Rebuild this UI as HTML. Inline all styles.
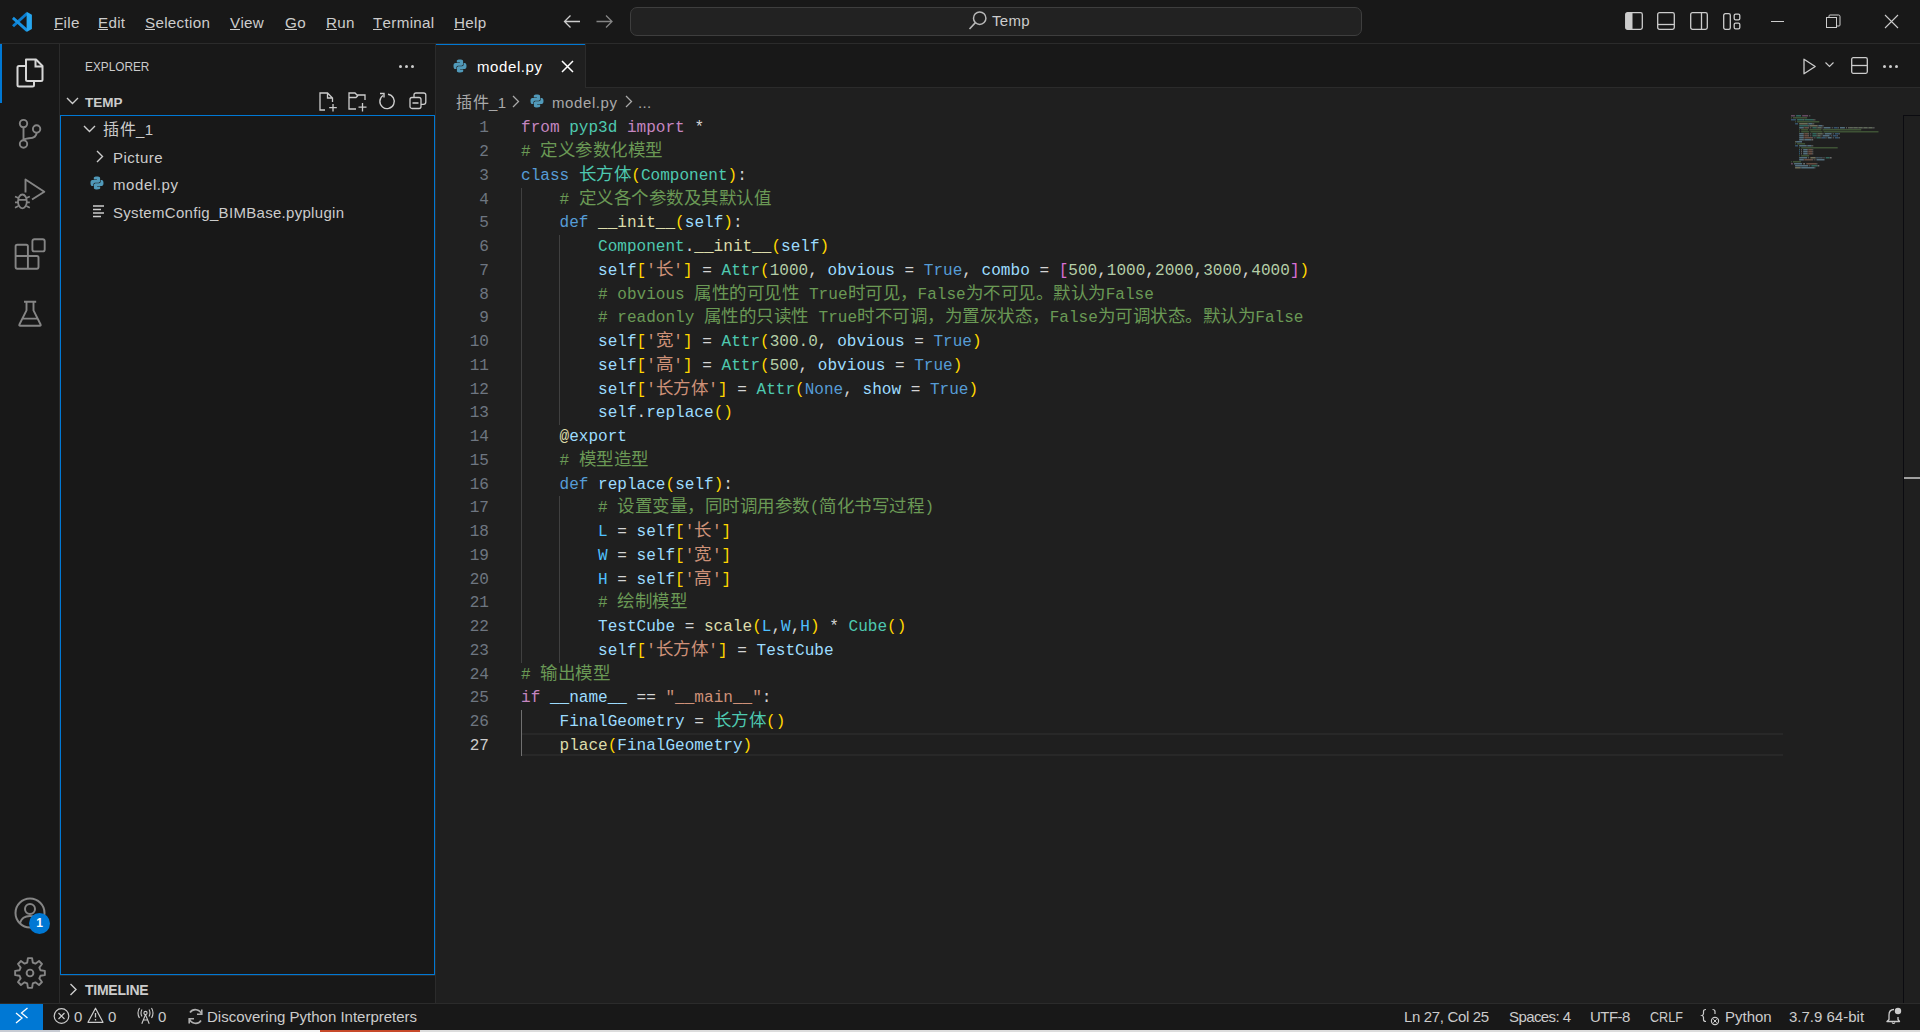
<!DOCTYPE html>
<html lang="zh-CN"><head><meta charset="utf-8">
<style>
*{box-sizing:border-box;margin:0;padding:0}
html,body{width:1920px;height:1032px;overflow:hidden;background:#181818;font-family:"Liberation Sans",sans-serif;color:#cccccc}
.a{position:absolute}
svg{position:absolute;overflow:visible}
#title{left:0;top:0;width:1920px;height:44px;background:#181818;border-bottom:1px solid #2b2b2b}
.menu{top:14px;font-size:15.2px;letter-spacing:0.3px;line-height:18px;color:#cccccc;white-space:pre}
.menu u{text-decoration:none;position:relative}.menu u:after{content:"";position:absolute;left:0;right:0.3px;top:15px;height:1px;background:#cccccc}
#cc{left:630px;top:7px;width:732px;height:29px;border:1px solid #3e3e3e;border-radius:7px;background:#222222}
#act{left:0;top:44px;width:60px;height:959px;background:#181818;border-right:1px solid #2b2b2b}
#side{left:60px;top:44px;width:376px;height:959px;background:#181818;border-right:1px solid #2b2b2b}
#tabs{left:436px;top:44px;width:1484px;height:44px;background:#181818;border-bottom:1px solid #2b2b2b}
#tab{left:436px;top:44px;width:150px;height:44px;background:#1f1f1f;border-right:1px solid #2b2b2b}
#editor{left:436px;top:88px;width:1484px;height:915px;background:#1f1f1f}
#status{left:0;top:1003px;width:1920px;height:27px;background:#181818;border-top:1px solid #2b2b2b}
#strip{left:0;top:1030px;width:1920px;height:2px;background:#dcdcdc}
.code{font-family:"Liberation Mono",monospace;font-size:16.065px;line-height:23.75px;white-space:pre;color:#d4d4d4}
.ln{position:absolute;left:436px;width:53px;text-align:right;color:#6e7681}
.cl{position:absolute;left:521px}
.c{font-size:17.5px;line-height:1;letter-spacing:0.5px}
.kw{color:#c586c0}.st{color:#569cd6}.cn{color:#4ec9b0}.fn{color:#dcdcaa}.vr{color:#9cdcfe}.cv{color:#4fc1ff}
.s{color:#ce9178}.n{color:#b5cea8}.cm{color:#6a9955}.b1{color:#ffd700}.b2{color:#da70d6}.b3{color:#179fff}
.ui{font-size:15px;letter-spacing:0.3px;line-height:18px;white-space:pre}
</style></head><body>
<div id="title" class="a"></div>
<div id="act" class="a"></div>
<div id="side" class="a"></div>
<div id="tabs" class="a"></div>
<div id="tab" class="a"></div>
<div class="a" style="left:436px;top:44px;width:149px;height:1px;background:#0078d4"></div>
<div id="editor" class="a"></div>
<div id="status" class="a"></div>
<div id="strip" class="a"></div>
<div class="a" style="left:522px;top:733px;width:1261px;height:23px;border-top:2px solid #282828;border-bottom:2px solid #282828"></div>
<div class="a" style="left:521px;top:709.5px;width:1px;height:46.5px;background:#707070"></div>
<div class="a" style="left:559px;top:496.25px;width:1px;height:166.25px;background:#404040"></div>
<div class="a" style="left:559px;top:235.00px;width:1px;height:190.00px;background:#404040"></div>
<div class="a" style="left:521px;top:187.50px;width:1px;height:475.00px;background:#404040"></div>
<div class="code ln" style="top:117.30px">1</div>
<div class="code cl" style="top:117.30px"><span class="kw">from</span> <span class="cn">pyp3d</span> <span class="kw">import</span> *</div>
<div class="code ln" style="top:141.05px">2</div>
<div class="code cl" style="top:141.05px"><span class="cm"># <span class="c">定义参数化模型</span></span></div>
<div class="code ln" style="top:164.80px">3</div>
<div class="code cl" style="top:164.80px"><span class="st">class</span> <span class="cn"><span class="c">长方体</span></span><span class="b1">(</span><span class="cn">Component</span><span class="b1">)</span>:</div>
<div class="code ln" style="top:188.55px">4</div>
<div class="code cl" style="top:188.55px">    <span class="cm"># <span class="c">定义各个参数及其默认值</span></span></div>
<div class="code ln" style="top:212.30px">5</div>
<div class="code cl" style="top:212.30px">    <span class="st">def</span> <span class="fn">__init__</span><span class="b1">(</span><span class="vr">self</span><span class="b1">)</span>:</div>
<div class="code ln" style="top:236.05px">6</div>
<div class="code cl" style="top:236.05px">        <span class="cn">Component</span>.<span class="fn">__init__</span><span class="b1">(</span><span class="vr">self</span><span class="b1">)</span></div>
<div class="code ln" style="top:259.80px">7</div>
<div class="code cl" style="top:259.80px">        <span class="vr">self</span><span class="b1">[</span><span class="s">'<span class="c">长</span>'</span><span class="b1">]</span> = <span class="cn">Attr</span><span class="b1">(</span><span class="n">1000</span>, <span class="vr">obvious</span> = <span class="st">True</span>, <span class="vr">combo</span> = <span class="b2">[</span><span class="n">500</span>,<span class="n">1000</span>,<span class="n">2000</span>,<span class="n">3000</span>,<span class="n">4000</span><span class="b2">]</span><span class="b1">)</span></div>
<div class="code ln" style="top:283.55px">8</div>
<div class="code cl" style="top:283.55px">        <span class="cm"># obvious <span class="c">属性的可见性</span> True<span class="c">时可见，</span>False<span class="c">为不可见。默认为</span>False</span></div>
<div class="code ln" style="top:307.30px">9</div>
<div class="code cl" style="top:307.30px">        <span class="cm"># readonly <span class="c">属性的只读性</span> True<span class="c">时不可调，为置灰状态，</span>False<span class="c">为可调状态。默认为</span>False</span></div>
<div class="code ln" style="top:331.05px">10</div>
<div class="code cl" style="top:331.05px">        <span class="vr">self</span><span class="b1">[</span><span class="s">'<span class="c">宽</span>'</span><span class="b1">]</span> = <span class="cn">Attr</span><span class="b1">(</span><span class="n">300.0</span>, <span class="vr">obvious</span> = <span class="st">True</span><span class="b1">)</span></div>
<div class="code ln" style="top:354.80px">11</div>
<div class="code cl" style="top:354.80px">        <span class="vr">self</span><span class="b1">[</span><span class="s">'<span class="c">高</span>'</span><span class="b1">]</span> = <span class="cn">Attr</span><span class="b1">(</span><span class="n">500</span>, <span class="vr">obvious</span> = <span class="st">True</span><span class="b1">)</span></div>
<div class="code ln" style="top:378.55px">12</div>
<div class="code cl" style="top:378.55px">        <span class="vr">self</span><span class="b1">[</span><span class="s">'<span class="c">长方体</span>'</span><span class="b1">]</span> = <span class="cn">Attr</span><span class="b1">(</span><span class="st">None</span>, <span class="vr">show</span> = <span class="st">True</span><span class="b1">)</span></div>
<div class="code ln" style="top:402.30px">13</div>
<div class="code cl" style="top:402.30px">        <span class="vr">self</span>.<span class="vr">replace</span><span class="b1">()</span></div>
<div class="code ln" style="top:426.05px">14</div>
<div class="code cl" style="top:426.05px">    <span class="fn">@</span><span class="vr">export</span></div>
<div class="code ln" style="top:449.80px">15</div>
<div class="code cl" style="top:449.80px">    <span class="cm"># <span class="c">模型造型</span></span></div>
<div class="code ln" style="top:473.55px">16</div>
<div class="code cl" style="top:473.55px">    <span class="st">def</span> <span class="vr">replace</span><span class="b1">(</span><span class="vr">self</span><span class="b1">)</span>:</div>
<div class="code ln" style="top:497.30px">17</div>
<div class="code cl" style="top:497.30px">        <span class="cm"># <span class="c">设置变量，同时调用参数</span>(<span class="c">简化书写过程</span>)</span></div>
<div class="code ln" style="top:521.05px">18</div>
<div class="code cl" style="top:521.05px">        <span class="cv">L</span> = <span class="vr">self</span><span class="b1">[</span><span class="s">'<span class="c">长</span>'</span><span class="b1">]</span></div>
<div class="code ln" style="top:544.80px">19</div>
<div class="code cl" style="top:544.80px">        <span class="cv">W</span> = <span class="vr">self</span><span class="b1">[</span><span class="s">'<span class="c">宽</span>'</span><span class="b1">]</span></div>
<div class="code ln" style="top:568.55px">20</div>
<div class="code cl" style="top:568.55px">        <span class="cv">H</span> = <span class="vr">self</span><span class="b1">[</span><span class="s">'<span class="c">高</span>'</span><span class="b1">]</span></div>
<div class="code ln" style="top:592.30px">21</div>
<div class="code cl" style="top:592.30px">        <span class="cm"># <span class="c">绘制模型</span></span></div>
<div class="code ln" style="top:616.05px">22</div>
<div class="code cl" style="top:616.05px">        <span class="vr">TestCube</span> = <span class="fn">scale</span><span class="b1">(</span><span class="cv">L</span>,<span class="cv">W</span>,<span class="cv">H</span><span class="b1">)</span> * <span class="cn">Cube</span><span class="b1">()</span></div>
<div class="code ln" style="top:639.80px">23</div>
<div class="code cl" style="top:639.80px">        <span class="vr">self</span><span class="b1">[</span><span class="s">'<span class="c">长方体</span>'</span><span class="b1">]</span> = <span class="vr">TestCube</span></div>
<div class="code ln" style="top:663.55px">24</div>
<div class="code cl" style="top:663.55px"><span class="cm"># <span class="c">输出模型</span></span></div>
<div class="code ln" style="top:687.30px">25</div>
<div class="code cl" style="top:687.30px"><span class="kw">if</span> <span class="vr">__name__</span> == <span class="s">"__main__"</span>:</div>
<div class="code ln" style="top:711.05px">26</div>
<div class="code cl" style="top:711.05px">    <span class="vr">FinalGeometry</span> = <span class="cn"><span class="c">长方体</span></span><span class="b1">()</span></div>
<div class="code ln" style="top:734.80px;color:#cccccc">27</div>
<div class="code cl" style="top:734.80px">    <span class="fn">place</span><span class="b1">(</span><span class="vr">FinalGeometry</span><span class="b1">)</span></div>
<svg style="left:1791px;top:115px;opacity:0.42" width="100" height="60"><rect x="0.0" y="0" width="3.9" height="1.5" fill="#c586c0"/><rect x="5.1" y="0" width="4.9" height="1.5" fill="#4ec9b0"/><rect x="11.2" y="0" width="5.9" height="1.5" fill="#c586c0"/><rect x="18.4" y="0" width="0.8" height="1.5" fill="#d4d4d4"/><rect x="0.0" y="2" width="0.8" height="1.5" fill="#6a9955"/><rect x="2.0" y="2" width="14.1" height="1.5" fill="#6a9955"/><rect x="0.0" y="4" width="4.9" height="1.5" fill="#569cd6"/><rect x="6.1" y="4" width="5.9" height="1.5" fill="#4ec9b0"/><rect x="12.2" y="4" width="0.8" height="1.5" fill="#d4d4d4"/><rect x="13.3" y="4" width="9.0" height="1.5" fill="#4ec9b0"/><rect x="22.4" y="4" width="0.8" height="1.5" fill="#d4d4d4"/><rect x="23.5" y="4" width="0.8" height="1.5" fill="#d4d4d4"/><rect x="4.1" y="6" width="0.8" height="1.5" fill="#6a9955"/><rect x="6.1" y="6" width="22.2" height="1.5" fill="#6a9955"/><rect x="4.1" y="8" width="2.9" height="1.5" fill="#569cd6"/><rect x="8.2" y="8" width="8.0" height="1.5" fill="#dcdcaa"/><rect x="16.3" y="8" width="0.8" height="1.5" fill="#d4d4d4"/><rect x="17.3" y="8" width="3.9" height="1.5" fill="#9cdcfe"/><rect x="21.4" y="8" width="0.8" height="1.5" fill="#d4d4d4"/><rect x="22.4" y="8" width="0.8" height="1.5" fill="#d4d4d4"/><rect x="8.2" y="10" width="9.0" height="1.5" fill="#4ec9b0"/><rect x="17.3" y="10" width="0.8" height="1.5" fill="#d4d4d4"/><rect x="18.4" y="10" width="8.0" height="1.5" fill="#dcdcaa"/><rect x="26.5" y="10" width="0.8" height="1.5" fill="#d4d4d4"/><rect x="27.5" y="10" width="3.9" height="1.5" fill="#9cdcfe"/><rect x="31.6" y="10" width="0.8" height="1.5" fill="#d4d4d4"/><rect x="8.2" y="12" width="3.9" height="1.5" fill="#9cdcfe"/><rect x="12.2" y="12" width="0.8" height="1.5" fill="#d4d4d4"/><rect x="13.3" y="12" width="3.9" height="1.5" fill="#ce9178"/><rect x="17.3" y="12" width="0.8" height="1.5" fill="#d4d4d4"/><rect x="19.4" y="12" width="0.8" height="1.5" fill="#d4d4d4"/><rect x="21.4" y="12" width="3.9" height="1.5" fill="#4ec9b0"/><rect x="25.5" y="12" width="0.8" height="1.5" fill="#d4d4d4"/><rect x="26.5" y="12" width="3.9" height="1.5" fill="#b5cea8"/><rect x="30.6" y="12" width="0.8" height="1.5" fill="#d4d4d4"/><rect x="32.6" y="12" width="6.9" height="1.5" fill="#9cdcfe"/><rect x="40.8" y="12" width="0.8" height="1.5" fill="#d4d4d4"/><rect x="42.8" y="12" width="3.9" height="1.5" fill="#569cd6"/><rect x="46.9" y="12" width="0.8" height="1.5" fill="#d4d4d4"/><rect x="49.0" y="12" width="4.9" height="1.5" fill="#9cdcfe"/><rect x="55.1" y="12" width="0.8" height="1.5" fill="#d4d4d4"/><rect x="57.1" y="12" width="0.8" height="1.5" fill="#d4d4d4"/><rect x="58.1" y="12" width="2.9" height="1.5" fill="#b5cea8"/><rect x="61.2" y="12" width="0.8" height="1.5" fill="#d4d4d4"/><rect x="62.2" y="12" width="3.9" height="1.5" fill="#b5cea8"/><rect x="66.3" y="12" width="0.8" height="1.5" fill="#d4d4d4"/><rect x="67.3" y="12" width="3.9" height="1.5" fill="#b5cea8"/><rect x="71.4" y="12" width="0.8" height="1.5" fill="#d4d4d4"/><rect x="72.4" y="12" width="3.9" height="1.5" fill="#b5cea8"/><rect x="76.5" y="12" width="0.8" height="1.5" fill="#d4d4d4"/><rect x="77.5" y="12" width="3.9" height="1.5" fill="#b5cea8"/><rect x="81.6" y="12" width="0.8" height="1.5" fill="#d4d4d4"/><rect x="82.6" y="12" width="0.8" height="1.5" fill="#d4d4d4"/><rect x="8.2" y="14" width="0.8" height="1.5" fill="#6a9955"/><rect x="10.2" y="14" width="6.9" height="1.5" fill="#6a9955"/><rect x="18.4" y="14" width="12.0" height="1.5" fill="#6a9955"/><rect x="31.6" y="14" width="38.6" height="1.5" fill="#6a9955"/><rect x="8.2" y="16" width="0.8" height="1.5" fill="#6a9955"/><rect x="10.2" y="16" width="8.0" height="1.5" fill="#6a9955"/><rect x="19.4" y="16" width="12.0" height="1.5" fill="#6a9955"/><rect x="32.6" y="16" width="54.9" height="1.5" fill="#6a9955"/><rect x="8.2" y="18" width="3.9" height="1.5" fill="#9cdcfe"/><rect x="12.2" y="18" width="0.8" height="1.5" fill="#d4d4d4"/><rect x="13.3" y="18" width="3.9" height="1.5" fill="#ce9178"/><rect x="17.3" y="18" width="0.8" height="1.5" fill="#d4d4d4"/><rect x="19.4" y="18" width="0.8" height="1.5" fill="#d4d4d4"/><rect x="21.4" y="18" width="3.9" height="1.5" fill="#4ec9b0"/><rect x="25.5" y="18" width="0.8" height="1.5" fill="#d4d4d4"/><rect x="26.5" y="18" width="4.9" height="1.5" fill="#b5cea8"/><rect x="31.6" y="18" width="0.8" height="1.5" fill="#d4d4d4"/><rect x="33.7" y="18" width="6.9" height="1.5" fill="#9cdcfe"/><rect x="41.8" y="18" width="0.8" height="1.5" fill="#d4d4d4"/><rect x="43.9" y="18" width="3.9" height="1.5" fill="#569cd6"/><rect x="47.9" y="18" width="0.8" height="1.5" fill="#d4d4d4"/><rect x="8.2" y="20" width="3.9" height="1.5" fill="#9cdcfe"/><rect x="12.2" y="20" width="0.8" height="1.5" fill="#d4d4d4"/><rect x="13.3" y="20" width="3.9" height="1.5" fill="#ce9178"/><rect x="17.3" y="20" width="0.8" height="1.5" fill="#d4d4d4"/><rect x="19.4" y="20" width="0.8" height="1.5" fill="#d4d4d4"/><rect x="21.4" y="20" width="3.9" height="1.5" fill="#4ec9b0"/><rect x="25.5" y="20" width="0.8" height="1.5" fill="#d4d4d4"/><rect x="26.5" y="20" width="2.9" height="1.5" fill="#b5cea8"/><rect x="29.6" y="20" width="0.8" height="1.5" fill="#d4d4d4"/><rect x="31.6" y="20" width="6.9" height="1.5" fill="#9cdcfe"/><rect x="39.8" y="20" width="0.8" height="1.5" fill="#d4d4d4"/><rect x="41.8" y="20" width="3.9" height="1.5" fill="#569cd6"/><rect x="45.9" y="20" width="0.8" height="1.5" fill="#d4d4d4"/><rect x="8.2" y="22" width="3.9" height="1.5" fill="#9cdcfe"/><rect x="12.2" y="22" width="0.8" height="1.5" fill="#d4d4d4"/><rect x="13.3" y="22" width="8.0" height="1.5" fill="#ce9178"/><rect x="21.4" y="22" width="0.8" height="1.5" fill="#d4d4d4"/><rect x="23.5" y="22" width="0.8" height="1.5" fill="#d4d4d4"/><rect x="25.5" y="22" width="3.9" height="1.5" fill="#4ec9b0"/><rect x="29.6" y="22" width="0.8" height="1.5" fill="#d4d4d4"/><rect x="30.6" y="22" width="3.9" height="1.5" fill="#569cd6"/><rect x="34.7" y="22" width="0.8" height="1.5" fill="#d4d4d4"/><rect x="36.7" y="22" width="3.9" height="1.5" fill="#9cdcfe"/><rect x="41.8" y="22" width="0.8" height="1.5" fill="#d4d4d4"/><rect x="43.9" y="22" width="3.9" height="1.5" fill="#569cd6"/><rect x="47.9" y="22" width="0.8" height="1.5" fill="#d4d4d4"/><rect x="8.2" y="24" width="3.9" height="1.5" fill="#9cdcfe"/><rect x="12.2" y="24" width="0.8" height="1.5" fill="#d4d4d4"/><rect x="13.3" y="24" width="6.9" height="1.5" fill="#9cdcfe"/><rect x="20.4" y="24" width="1.8" height="1.5" fill="#d4d4d4"/><rect x="4.1" y="26" width="0.8" height="1.5" fill="#dcdcaa"/><rect x="5.1" y="26" width="5.9" height="1.5" fill="#9cdcfe"/><rect x="4.1" y="28" width="0.8" height="1.5" fill="#6a9955"/><rect x="6.1" y="28" width="8.0" height="1.5" fill="#6a9955"/><rect x="4.1" y="30" width="2.9" height="1.5" fill="#569cd6"/><rect x="8.2" y="30" width="6.9" height="1.5" fill="#9cdcfe"/><rect x="15.3" y="30" width="0.8" height="1.5" fill="#d4d4d4"/><rect x="16.3" y="30" width="3.9" height="1.5" fill="#9cdcfe"/><rect x="20.4" y="30" width="0.8" height="1.5" fill="#d4d4d4"/><rect x="21.4" y="30" width="0.8" height="1.5" fill="#d4d4d4"/><rect x="8.2" y="32" width="0.8" height="1.5" fill="#6a9955"/><rect x="10.2" y="32" width="36.5" height="1.5" fill="#6a9955"/><rect x="8.2" y="34" width="0.8" height="1.5" fill="#4fc1ff"/><rect x="10.2" y="34" width="0.8" height="1.5" fill="#d4d4d4"/><rect x="12.2" y="34" width="3.9" height="1.5" fill="#9cdcfe"/><rect x="16.3" y="34" width="0.8" height="1.5" fill="#d4d4d4"/><rect x="17.3" y="34" width="3.9" height="1.5" fill="#ce9178"/><rect x="21.4" y="34" width="0.8" height="1.5" fill="#d4d4d4"/><rect x="8.2" y="36" width="0.8" height="1.5" fill="#4fc1ff"/><rect x="10.2" y="36" width="0.8" height="1.5" fill="#d4d4d4"/><rect x="12.2" y="36" width="3.9" height="1.5" fill="#9cdcfe"/><rect x="16.3" y="36" width="0.8" height="1.5" fill="#d4d4d4"/><rect x="17.3" y="36" width="3.9" height="1.5" fill="#ce9178"/><rect x="21.4" y="36" width="0.8" height="1.5" fill="#d4d4d4"/><rect x="8.2" y="38" width="0.8" height="1.5" fill="#4fc1ff"/><rect x="10.2" y="38" width="0.8" height="1.5" fill="#d4d4d4"/><rect x="12.2" y="38" width="3.9" height="1.5" fill="#9cdcfe"/><rect x="16.3" y="38" width="0.8" height="1.5" fill="#d4d4d4"/><rect x="17.3" y="38" width="3.9" height="1.5" fill="#ce9178"/><rect x="21.4" y="38" width="0.8" height="1.5" fill="#d4d4d4"/><rect x="8.2" y="40" width="0.8" height="1.5" fill="#6a9955"/><rect x="10.2" y="40" width="8.0" height="1.5" fill="#6a9955"/><rect x="8.2" y="42" width="8.0" height="1.5" fill="#9cdcfe"/><rect x="17.3" y="42" width="0.8" height="1.5" fill="#d4d4d4"/><rect x="19.4" y="42" width="4.9" height="1.5" fill="#dcdcaa"/><rect x="24.5" y="42" width="0.8" height="1.5" fill="#d4d4d4"/><rect x="25.5" y="42" width="0.8" height="1.5" fill="#4fc1ff"/><rect x="26.5" y="42" width="0.8" height="1.5" fill="#d4d4d4"/><rect x="27.5" y="42" width="0.8" height="1.5" fill="#4fc1ff"/><rect x="28.6" y="42" width="0.8" height="1.5" fill="#d4d4d4"/><rect x="29.6" y="42" width="0.8" height="1.5" fill="#4fc1ff"/><rect x="30.6" y="42" width="0.8" height="1.5" fill="#d4d4d4"/><rect x="32.6" y="42" width="0.8" height="1.5" fill="#d4d4d4"/><rect x="34.7" y="42" width="3.9" height="1.5" fill="#4ec9b0"/><rect x="38.8" y="42" width="1.8" height="1.5" fill="#d4d4d4"/><rect x="8.2" y="44" width="3.9" height="1.5" fill="#9cdcfe"/><rect x="12.2" y="44" width="0.8" height="1.5" fill="#d4d4d4"/><rect x="13.3" y="44" width="8.0" height="1.5" fill="#ce9178"/><rect x="21.4" y="44" width="0.8" height="1.5" fill="#d4d4d4"/><rect x="23.5" y="44" width="0.8" height="1.5" fill="#d4d4d4"/><rect x="25.5" y="44" width="8.0" height="1.5" fill="#9cdcfe"/><rect x="0.0" y="46" width="0.8" height="1.5" fill="#6a9955"/><rect x="2.0" y="46" width="8.0" height="1.5" fill="#6a9955"/><rect x="0.0" y="48" width="1.8" height="1.5" fill="#c586c0"/><rect x="3.1" y="48" width="8.0" height="1.5" fill="#9cdcfe"/><rect x="12.2" y="48" width="1.8" height="1.5" fill="#d4d4d4"/><rect x="15.3" y="48" width="10.0" height="1.5" fill="#ce9178"/><rect x="25.5" y="48" width="0.8" height="1.5" fill="#d4d4d4"/><rect x="4.1" y="50" width="13.1" height="1.5" fill="#9cdcfe"/><rect x="18.4" y="50" width="0.8" height="1.5" fill="#d4d4d4"/><rect x="20.4" y="50" width="5.9" height="1.5" fill="#4ec9b0"/><rect x="26.5" y="50" width="1.8" height="1.5" fill="#d4d4d4"/><rect x="4.1" y="52" width="4.9" height="1.5" fill="#dcdcaa"/><rect x="9.2" y="52" width="0.8" height="1.5" fill="#d4d4d4"/><rect x="10.2" y="52" width="13.1" height="1.5" fill="#9cdcfe"/><rect x="23.5" y="52" width="0.8" height="1.5" fill="#d4d4d4"/></svg>
<div class="a" style="left:1903px;top:115px;width:17px;height:888px;border-left:1px solid #0b0b10;border-top:1px solid #0b0b10"></div>
<div class="a" style="left:1904px;top:477px;width:16px;height:2px;background:#a0a0a0"></div>

<!-- title bar -->
<svg style="left:8px;top:8px" width="30" height="28" viewBox="0 0 30 28"><path d="M19.2 5.2L5 18.3" stroke="#0b7dd0" stroke-width="2.9"/><path d="M4.9 9.9L19.2 22.6" stroke="#1792e2" stroke-width="2.9"/><path d="M18.6 3.8L23.9 6.8V21L18.6 24Z" fill="#27a7f0"/></svg>
<div class="a menu" style="left:54px"><u>F</u>ile</div>
<div class="a menu" style="left:98px"><u>E</u>dit</div>
<div class="a menu" style="left:145px"><u>S</u>election</div>
<div class="a menu" style="left:230px"><u>V</u>iew</div>
<div class="a menu" style="left:285px"><u>G</u>o</div>
<div class="a menu" style="left:326px"><u>R</u>un</div>
<div class="a menu" style="left:373px"><u>T</u>erminal</div>
<div class="a menu" style="left:454px"><u>H</u>elp</div>
<svg style="left:563px;top:14px" width="18" height="15" viewBox="0 0 18 15"><path d="M17 7.5H1.5M7.5 1.5L1.5 7.5L7.5 13.5" stroke="#cccccc" stroke-width="1.3" fill="none"/></svg>
<svg style="left:596px;top:14px" width="18" height="15" viewBox="0 0 18 15"><path d="M0.5 7.5H16M10 1.5L16 7.5L10 13.5" stroke="#858585" stroke-width="1.3" fill="none"/></svg>
<div id="cc" class="a"></div>
<svg style="left:968px;top:11px" width="20" height="20" viewBox="0 0 20 20"><circle cx="11.7" cy="7.2" r="6.2" stroke="#b8b8b8" stroke-width="1.5" fill="none"/><path d="M7.4 11.6L1.5 18" stroke="#b8b8b8" stroke-width="1.6"/></svg>
<div class="a ui" style="left:992px;top:12px;color:#cccccc">Temp</div>
<!-- layout icons -->
<svg style="left:1625px;top:12px" width="18" height="18" viewBox="0 0 18 18"><rect x="0.7" y="0.7" width="16.6" height="16.6" rx="1.8" stroke="#cccccc" stroke-width="1.3" fill="none"/><rect x="1" y="1" width="6.5" height="16" fill="#cccccc"/></svg>
<svg style="left:1657px;top:12px" width="18" height="18" viewBox="0 0 18 18"><rect x="0.7" y="0.7" width="16.6" height="16.6" rx="1.8" stroke="#cccccc" stroke-width="1.3" fill="none"/><path d="M1 12.5H17" stroke="#cccccc" stroke-width="1.3"/></svg>
<svg style="left:1690px;top:12px" width="18" height="18" viewBox="0 0 18 18"><rect x="0.7" y="0.7" width="16.6" height="16.6" rx="1.8" stroke="#cccccc" stroke-width="1.3" fill="none"/><path d="M11.5 1V17" stroke="#cccccc" stroke-width="1.3"/></svg>
<svg style="left:1723px;top:13px" width="18" height="17" viewBox="0 0 18 17"><rect x="0.7" y="0.7" width="6.6" height="15.6" rx="1.6" stroke="#cccccc" stroke-width="1.3" fill="none"/><rect x="11.2" y="1.2" width="5.6" height="5.6" rx="1.4" stroke="#cccccc" stroke-width="1.3" fill="none"/><rect x="11.2" y="10.2" width="5.6" height="5.6" rx="1.4" stroke="#cccccc" stroke-width="1.3" fill="none"/></svg>
<svg style="left:1771px;top:20px" width="14" height="3" viewBox="0 0 14 3"><path d="M0 1.5H13" stroke="#cccccc" stroke-width="1"/></svg>
<svg style="left:1826px;top:14px" width="15" height="15" viewBox="0 0 15 15"><rect x="0.5" y="3.5" width="10" height="10" stroke="#cccccc" stroke-width="1" fill="none"/><path d="M3 3.5V2Q3 1 4 1H12.5Q14 1 14 2.5V11Q14 12 13 12H10.5" stroke="#cccccc" stroke-width="1" fill="none"/></svg>
<svg style="left:1884px;top:14px" width="15" height="15" viewBox="0 0 15 15"><path d="M1 1L14 14M14 1L1 14" stroke="#cccccc" stroke-width="1.1"/></svg>

<!-- activity bar -->
<div class="a" style="left:0;top:44px;width:2px;height:59px;background:#0078d4"></div>
<!-- explorer icon -->
<svg style="left:16px;top:58px" width="28" height="30" viewBox="0 0 28 30"><path d="M10 1.5H20L26.5 8V21.5Q26.5 23 25 23H11.5Q10 23 10 21.5Z" stroke="#d7d7d7" stroke-width="2" fill="none" stroke-linejoin="round"/><path d="M19.5 1.5V8.5H26.5" stroke="#d7d7d7" stroke-width="2" fill="none"/><path d="M10 8H3Q1.5 8 1.5 9.5V27Q1.5 28.5 3 28.5H16.5Q18 28.5 18 27V23" stroke="#d7d7d7" stroke-width="2" fill="none"/></svg>
<!-- scm -->
<svg style="left:17px;top:118px" width="28" height="32" viewBox="0 0 28 32"><circle cx="6.5" cy="5.6" r="3.7" stroke="#858585" stroke-width="1.9" fill="none"/><circle cx="6.5" cy="26" r="3.7" stroke="#858585" stroke-width="1.9" fill="none"/><circle cx="19.6" cy="11" r="3.7" stroke="#858585" stroke-width="1.9" fill="none"/><path d="M6.5 9.3V22.3M19.6 14.7Q19.6 19.8 12 20.3Q7 20.8 6.5 22.3" stroke="#858585" stroke-width="1.9" fill="none"/></svg>
<!-- run and debug -->
<svg style="left:14px;top:178px" width="32" height="32" viewBox="0 0 32 32"><path d="M11.5 14.5V1.5L30.3 13.7L18 21.5" stroke="#858585" stroke-width="1.9" fill="none" stroke-linejoin="round"/><ellipse cx="8.4" cy="23.4" rx="4.4" ry="6.9" stroke="#858585" stroke-width="1.8" fill="none"/><path d="M4.2 21.8H12.6M1 18.5L4.4 20M1 24.4H4.2M1 29.8L4.4 28M15.8 18.5L12.4 20M15.8 24.4H12.6M15.8 29.8L12.4 28" stroke="#858585" stroke-width="1.7" fill="none"/></svg>
<!-- extensions -->
<svg style="left:15px;top:238px" width="32" height="32" viewBox="0 0 32 32"><path d="M2.2 6.8H11.3Q12.9 6.8 12.9 8.4V18H21.9Q23.5 18 23.5 19.6V29.1Q23.5 30.7 21.9 30.7H2.2Q0.6 30.7 0.6 29.1V8.4Q0.6 6.8 2.2 6.8Z M0.6 18H12.9V30.7" stroke="#858585" stroke-width="1.9" fill="none" stroke-linejoin="round"/><rect x="17.4" y="1.2" width="12.3" height="12.2" rx="2" stroke="#858585" stroke-width="1.9" fill="none"/></svg>
<!-- testing -->
<svg style="left:18px;top:300px" width="26" height="28" viewBox="0 0 26 28"><path d="M6 1.8H18.2M8.5 1.8V10.4L1.4 24.5Q0.9 25.7 2.2 25.7H21.8Q23.1 25.7 22.6 24.5L15.5 10.4V1.8M4.3 18.6H19.7" stroke="#858585" stroke-width="1.9" fill="none" stroke-linejoin="round"/></svg>
<!-- accounts -->
<svg style="left:14px;top:897px" width="34" height="34" viewBox="0 0 34 34"><circle cx="16" cy="16" r="14.5" stroke="#858585" stroke-width="2" fill="none"/><circle cx="16" cy="12" r="5" stroke="#858585" stroke-width="2" fill="none"/><path d="M6 26Q8 19 16 19Q24 19 26 26" stroke="#858585" stroke-width="2" fill="none"/></svg>
<div class="a" style="left:29px;top:913px;width:21px;height:21px;border-radius:50%;background:#0078d4;color:#fff;font-size:12px;font-weight:700;text-align:center;line-height:21px">1</div>
<!-- settings -->
<svg style="left:14px;top:957px" width="32" height="32" viewBox="0 0 32 32"><path d="M13.91 1.15 L18.09 1.15 L18.80 5.57 L21.40 6.65 L25.03 4.02 L27.98 6.97 L25.35 10.60 L26.43 13.20 L30.85 13.91 L30.85 18.09 L26.43 18.80 L25.35 21.40 L27.98 25.03 L25.03 27.98 L21.40 25.35 L18.80 26.43 L18.09 30.85 L13.91 30.85 L13.20 26.43 L10.60 25.35 L6.97 27.98 L4.02 25.03 L6.65 21.40 L5.57 18.80 L1.15 18.09 L1.15 13.91 L5.57 13.20 L6.65 10.60 L4.02 6.97 L6.97 4.02 L10.60 6.65 L13.20 5.57Z" stroke="#858585" stroke-width="1.9" fill="none" stroke-linejoin="round"/><circle cx="16" cy="16" r="3.4" stroke="#858585" stroke-width="1.9" fill="none"/></svg>

<!-- sidebar -->
<div class="a ui" style="left:85px;top:58px;font-size:13.5px;letter-spacing:0;transform:scaleX(0.875);transform-origin:0 0;color:#cccccc">EXPLORER</div>
<div class="a" style="left:399px;top:65px;width:3px;height:3px;border-radius:50%;background:#cccccc"></div>
<div class="a" style="left:405px;top:65px;width:3px;height:3px;border-radius:50%;background:#cccccc"></div>
<div class="a" style="left:411px;top:65px;width:3px;height:3px;border-radius:50%;background:#cccccc"></div>
<svg style="left:66px;top:97px" width="13" height="8" viewBox="0 0 13 8"><path d="M1 1L6.5 6.5L12 1" stroke="#cccccc" stroke-width="1.4" fill="none"/></svg>
<div class="a ui" style="left:85px;top:93.5px;font-size:13.5px;letter-spacing:0;font-weight:700;color:#cccccc">TEMP</div>
<svg style="left:319px;top:92px" width="20" height="20" viewBox="0 0 20 20"><path d="M6 18H1V1H8.5L13.5 6V10M8.5 1V6H13.5" stroke="#cccccc" stroke-width="1.3" fill="none"/><path d="M14 12V19.5M10.2 15.7H17.8" stroke="#cccccc" stroke-width="1.3"/></svg>
<svg style="left:348px;top:92px" width="21" height="20" viewBox="0 0 21 20"><path d="M8 17H1V1H7L9 3H17V8M1 5.5H8L10 3.5" stroke="#cccccc" stroke-width="1.3" fill="none"/><path d="M14.5 11V19.5M10.5 15.2H18.5" stroke="#cccccc" stroke-width="1.3"/></svg>
<svg style="left:379px;top:92px" width="18" height="20" viewBox="0 0 18 20"><path d="M4 3.5A7.2 7.2 0 1 0 9 2.3" stroke="#cccccc" stroke-width="1.4" fill="none"/><path d="M1 1.5H5V5.5" stroke="#cccccc" stroke-width="1.4" fill="none"/></svg>
<svg style="left:409px;top:92px" width="18" height="18" viewBox="0 0 18 18"><rect x="1" y="5.5" width="11" height="11" rx="2" stroke="#cccccc" stroke-width="1.3" fill="none"/><path d="M5 5.5V3Q5 1 7 1H14.5Q16.8 1 16.8 3V10Q16.8 12.3 14.5 12.3H12M3.5 11H9.5" stroke="#cccccc" stroke-width="1.3" fill="none"/></svg>
<div class="a" style="left:60px;top:115px;width:375px;height:860px;border:1px solid #0078d4"></div>
<svg style="left:83px;top:125px" width="13" height="8" viewBox="0 0 13 8"><path d="M1 1L6.5 6.5L12 1" stroke="#cccccc" stroke-width="1.4" fill="none"/></svg>
<div class="a ui" style="left:103px;top:121px;color:#cccccc"><span class="c" style="font-size:16px">插件</span>_1</div>
<svg style="left:96px;top:150px" width="8" height="13" viewBox="0 0 8 13"><path d="M1 1L6.5 6.5L1 12" stroke="#cccccc" stroke-width="1.4" fill="none"/></svg>
<div class="a ui" style="left:113px;top:149px;letter-spacing:0.5px;color:#cccccc">Picture</div>
<svg style="left:90px;top:176px" width="14" height="14" viewBox="0 0 14 14"><path d="M6.8 0.5C3.6 0.5 3.8 1.9 3.8 1.9V3.4H6.9V3.9H2.6C2.6 3.9 0.5 3.6 0.5 6.9C0.5 10.1 2.3 10 2.3 10H3.4V8.5C3.4 8.5 3.3 6.7 5.2 6.7H8.3C8.3 6.7 10.1 6.7 10.1 5V2.1C10.1 2.1 10.4 0.5 6.8 0.5Z" fill="#519aba"/><path d="M7.2 13.5C10.4 13.5 10.2 12.1 10.2 12.1V10.6H7.1V10.1H11.4C11.4 10.1 13.5 10.4 13.5 7.1C13.5 3.9 11.7 4 11.7 4H10.6V5.5C10.6 5.5 10.7 7.3 8.8 7.3H5.7C5.7 7.3 3.9 7.3 3.9 9V11.9C3.9 11.9 3.6 13.5 7.2 13.5Z" fill="#519aba"/></svg>
<div class="a ui" style="left:113px;top:176px;letter-spacing:0.6px;color:#cccccc">model.py</div>
<svg style="left:93px;top:205px" width="13" height="13" viewBox="0 0 13 13"><path d="M0 1H11M0 4.5H8M0 8H11M0 11.5H8" stroke="#cccccc" stroke-width="1.5"/></svg>
<div class="a ui" style="left:113px;top:204px;color:#cccccc">SystemConfig_BIMBase.pyplugin</div>
<div class="a" style="left:60px;top:975px;width:375px;height:1px;background:#2b2b2b"></div>
<svg style="left:69px;top:983px" width="9" height="13" viewBox="0 0 8 13"><path d="M1 1L6.5 6.5L1 12" stroke="#cccccc" stroke-width="1.4" fill="none"/></svg>
<div class="a ui" style="left:85px;top:981px;font-size:14px;letter-spacing:-0.25px;font-weight:700;color:#cccccc">TIMELINE</div>

<!-- tab -->
<svg style="left:453px;top:59px" width="14" height="14" viewBox="0 0 14 14"><path d="M6.8 0.5C3.6 0.5 3.8 1.9 3.8 1.9V3.4H6.9V3.9H2.6C2.6 3.9 0.5 3.6 0.5 6.9C0.5 10.1 2.3 10 2.3 10H3.4V8.5C3.4 8.5 3.3 6.7 5.2 6.7H8.3C8.3 6.7 10.1 6.7 10.1 5V2.1C10.1 2.1 10.4 0.5 6.8 0.5Z" fill="#519aba"/><path d="M7.2 13.5C10.4 13.5 10.2 12.1 10.2 12.1V10.6H7.1V10.1H11.4C11.4 10.1 13.5 10.4 13.5 7.1C13.5 3.9 11.7 4 11.7 4H10.6V5.5C10.6 5.5 10.7 7.3 8.8 7.3H5.7C5.7 7.3 3.9 7.3 3.9 9V11.9C3.9 11.9 3.6 13.5 7.2 13.5Z" fill="#519aba"/></svg>
<div class="a ui" style="left:477px;top:58px;letter-spacing:0.6px;color:#ffffff">model.py</div>
<svg style="left:561px;top:60px" width="13" height="13" viewBox="0 0 13 13"><path d="M1 1L12 12M12 1L1 12" stroke="#ffffff" stroke-width="1.5"/></svg>
<svg style="left:1803px;top:58px" width="13" height="17" viewBox="0 0 13 17"><path d="M1 1.2V15.8L12.2 8.5Z" stroke="#cccccc" stroke-width="1.3" fill="none" stroke-linejoin="round"/></svg>
<svg style="left:1825px;top:62px" width="9" height="6" viewBox="0 0 9 6"><path d="M0.5 0.5L4.5 4.5L8.5 0.5" stroke="#cccccc" stroke-width="1.1" fill="none"/></svg>
<svg style="left:1851px;top:57px" width="17" height="17" viewBox="0 0 17 17"><rect x="0.7" y="0.7" width="15.6" height="15.6" rx="1.5" stroke="#cccccc" stroke-width="1.3" fill="none"/><path d="M1 8.5H16" stroke="#cccccc" stroke-width="1.3"/></svg>
<div class="a" style="left:1883px;top:65px;width:3px;height:3px;border-radius:50%;background:#cccccc"></div>
<div class="a" style="left:1889px;top:65px;width:3px;height:3px;border-radius:50%;background:#cccccc"></div>
<div class="a" style="left:1895px;top:65px;width:3px;height:3px;border-radius:50%;background:#cccccc"></div>

<!-- breadcrumbs -->
<div class="a ui" style="left:456px;top:94px;color:#a9a9a9"><span class="c" style="font-size:16px">插件</span>_1</div>
<svg style="left:512px;top:95px" width="8" height="13" viewBox="0 0 8 13"><path d="M1 1L6.5 6.5L1 12" stroke="#a9a9a9" stroke-width="1.3" fill="none"/></svg>
<svg style="left:530px;top:94px" width="14" height="14" viewBox="0 0 14 14"><path d="M6.8 0.5C3.6 0.5 3.8 1.9 3.8 1.9V3.4H6.9V3.9H2.6C2.6 3.9 0.5 3.6 0.5 6.9C0.5 10.1 2.3 10 2.3 10H3.4V8.5C3.4 8.5 3.3 6.7 5.2 6.7H8.3C8.3 6.7 10.1 6.7 10.1 5V2.1C10.1 2.1 10.4 0.5 6.8 0.5Z" fill="#519aba"/><path d="M7.2 13.5C10.4 13.5 10.2 12.1 10.2 12.1V10.6H7.1V10.1H11.4C11.4 10.1 13.5 10.4 13.5 7.1C13.5 3.9 11.7 4 11.7 4H10.6V5.5C10.6 5.5 10.7 7.3 8.8 7.3H5.7C5.7 7.3 3.9 7.3 3.9 9V11.9C3.9 11.9 3.6 13.5 7.2 13.5Z" fill="#519aba"/></svg>
<div class="a ui" style="left:552px;top:94px;letter-spacing:0.6px;color:#a9a9a9">model.py</div>
<svg style="left:625px;top:95px" width="8" height="13" viewBox="0 0 8 13"><path d="M1 1L6.5 6.5L1 12" stroke="#a9a9a9" stroke-width="1.3" fill="none"/></svg>
<div class="a ui" style="left:638px;top:94px;color:#a9a9a9">...</div>

<!-- status bar -->
<div class="a" style="left:0;top:1004px;width:43px;height:26px;background:#0078d4"></div>
<svg style="left:14px;top:1006px" width="16" height="20" viewBox="0 0 16 20"><path d="M2 7L8 12L2 17M13.5 2L7.5 7L13.5 12" stroke="#ffffff" stroke-width="1.3" fill="none"/></svg>
<svg style="left:53px;top:1008px" width="17" height="17" viewBox="0 0 17 17"><circle cx="8.5" cy="8" r="7.3" stroke="#cccccc" stroke-width="1.2" fill="none"/><path d="M5.5 5L11.5 11M11.5 5L5.5 11" stroke="#cccccc" stroke-width="1.2"/></svg>
<div class="a ui" style="left:74px;top:1008px;letter-spacing:0">0</div>
<svg style="left:87px;top:1007px" width="17" height="17" viewBox="0 0 17 17"><path d="M8.5 1.2L16 15.3H1Z" stroke="#cccccc" stroke-width="1.2" fill="none" stroke-linejoin="round"/><path d="M8.5 6V10.5M8.5 12V13.5" stroke="#cccccc" stroke-width="1.3"/></svg>
<div class="a ui" style="left:108px;top:1008px;letter-spacing:0">0</div>
<svg style="left:137px;top:1007px" width="18" height="18" viewBox="0 0 18 18"><circle cx="8.5" cy="6" r="1.6" stroke="#cccccc" stroke-width="1.1" fill="none"/><path d="M8.5 7.6L4.8 16.8M8.5 7.6L12.2 16.8M6 13H11M5 2.5Q3 6 5 9.5M12 2.5Q14 6 12 9.5M2.5 1Q-0.5 6 2.5 11M14.5 1Q17.5 6 14.5 11" stroke="#cccccc" stroke-width="1.1" fill="none"/></svg>
<div class="a ui" style="left:158px;top:1008px;letter-spacing:0">0</div>
<svg style="left:187px;top:1008px" width="17" height="17" viewBox="0 0 17 17"><path d="M3 4.5A6.5 6.5 0 0 1 14.5 6M14 12.5A6.5 6.5 0 0 1 2.5 11" stroke="#b0b0b0" stroke-width="1.6" fill="none"/><path d="M14.8 1.5V6.3H10M2.2 15.5V10.7H7" stroke="#b0b0b0" stroke-width="1.6" fill="none"/></svg>
<div class="a ui" style="left:207px;top:1008px;letter-spacing:0">Discovering Python Interpreters</div>
<div class="a ui" style="left:1404px;top:1008px;letter-spacing:-0.34px">Ln 27, Col 25</div>
<div class="a ui" style="left:1509px;top:1008px;letter-spacing:-0.59px">Spaces: 4</div>
<div class="a ui" style="left:1590px;top:1008px;letter-spacing:-0.55px">UTF-8</div>
<div class="a ui" style="left:1650px;top:1008px;letter-spacing:0;transform:scaleX(0.84);transform-origin:0 0">CRLF</div>
<svg style="left:1701px;top:1008px" width="20" height="18" viewBox="0 0 20 18"><path d="M5 1.5Q2.5 1.5 2.5 3.5V5.5Q2.5 7 1 7.5Q2.5 8 2.5 9.5V11.5Q2.5 13.5 5 13.5M11.5 1.5Q14 1.5 14 3.5V6" stroke="#cccccc" stroke-width="1.2" fill="none"/><circle cx="14" cy="13" r="3.6" stroke="#cccccc" stroke-width="1.2" fill="none"/><path d="M12.3 11.3L15.7 14.7M15.7 11.3L12.3 14.7" stroke="#cccccc" stroke-width="1"/></svg>
<div class="a ui" style="left:1725px;top:1008px;letter-spacing:0">Python</div>
<div class="a ui" style="left:1789px;top:1008px;letter-spacing:0">3.7.9 64-bit</div>
<svg style="left:1885px;top:1007px" width="18" height="18" viewBox="0 0 18 18"><path d="M9 2.5Q4 2.5 4 8V12.5L2 14.5H14.5L13 12.5V10" stroke="#cccccc" stroke-width="1.3" fill="none" stroke-linejoin="round"/><path d="M7 15.5Q8.5 17.5 10 15.5" stroke="#cccccc" stroke-width="1.2" fill="none"/><circle cx="13" cy="4" r="3.2" fill="#cccccc"/></svg>
<!-- bottom strip colors -->
<div class="a" style="left:0;top:1030px;width:60px;height:2px;background:#c8ccd4"></div>
<div class="a" style="left:60px;top:1030px;width:260px;height:2px;background:#f4f4f4"></div>
<div class="a" style="left:320px;top:1030px;width:100px;height:2px;background:#c84a2a"></div>
</body></html>
